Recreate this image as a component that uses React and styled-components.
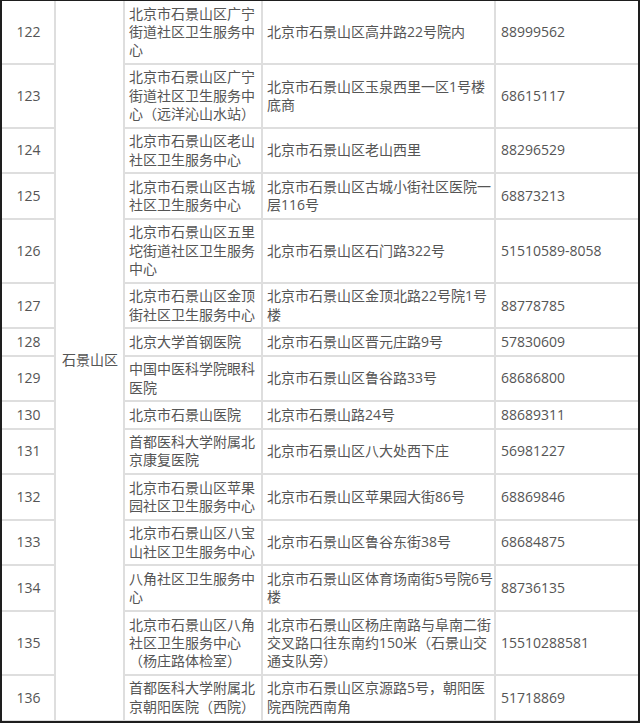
import React from "react";
import styled, { createGlobalStyle } from "styled-components";

const Global = createGlobalStyle`
  html, body { margin: 0; padding: 0; background: #fff; }
`;

const Frame = styled.div`
  width: 640px;
  height: 723px;
  box-sizing: border-box;
  border-style: solid;
  border-color: #1e1e1e;
  border-width: 1px 2px 2px 2px;
  overflow: hidden;
  background: #fff;
`;

const Table = styled.table`
  width: 636px;
  border-collapse: collapse;
  table-layout: fixed;
  border: none;
  font-family: "Open Sans", "Noto Sans CJK SC", sans-serif;
  font-size: 14px;
  line-height: 18.3px;
  color: #555;
  text-spacing-trim: space-all;

  tbody tr:first-child td {
    border-top: none;
  }
`;

const Col = styled.col`
  width: ${(p) => p.$w}px;
`;

const Cell = styled.td`
  border: 2px solid #dedede;
  padding: 3.5px 0 3.5px 4px;
  vertical-align: middle;
  text-align: left;
  word-break: normal;
`;

const NumCell = styled(Cell)`
  border-left: none;
  text-align: center;
  padding-left: 1px;
`;

const DistrictCell = styled(Cell)`
  padding-left: 6px;
`;

const PhoneCell = styled(Cell)`
  border-right: none;
  padding-left: 5px;
`;

const rows = [
  ["122", "北京市石景山区广宁街道社区卫生服务中心", "北京市石景山区高井路22号院内", "88999562"],
  ["123", "北京市石景山区广宁街道社区卫生服务中心（远洋沁山水站）", "北京市石景山区玉泉西里一区1号楼底商", "68615117"],
  ["124", "北京市石景山区老山社区卫生服务中心", "北京市石景山区老山西里", "88296529"],
  ["125", "北京市石景山区古城社区卫生服务中心", "北京市石景山区古城小街社区医院一层116号", "68873213"],
  ["126", "北京市石景山区五里坨街道社区卫生服务中心", "北京市石景山区石门路322号", "51510589-8058"],
  ["127", "北京市石景山区金顶街社区卫生服务中心", "北京市石景山区金顶北路22号院1号楼", "88778785"],
  ["128", "北京大学首钢医院", "北京市石景山区晋元庄路9号", "57830609"],
  ["129", "中国中医科学院眼科医院", "北京市石景山区鲁谷路33号", "68686800"],
  ["130", "北京市石景山医院", "北京市石景山路24号", "88689311"],
  ["131", "首都医科大学附属北京康复医院", "北京市石景山区八大处西下庄", "56981227"],
  ["132", "北京市石景山区苹果园社区卫生服务中心", "北京市石景山区苹果园大街86号", "68869846"],
  ["133", "北京市石景山区八宝山社区卫生服务中心", "北京市石景山区鲁谷东街38号", "68684875"],
  ["134", "八角社区卫生服务中心", "北京市石景山区体育场南街5号院6号楼", "88736135"],
  ["135", "北京市石景山区八角社区卫生服务中心（杨庄路体检室）", "北京市石景山区杨庄南路与阜南二街交叉路口往东南约150米（石景山交通支队旁）", "15510288581"],
  ["136", "首都医科大学附属北京朝阳医院（西院）", "北京市石景山区京源路5号，朝阳医院西院西南角", "51718869"],
];

export default function App() {
  return (
    <>
      <Global />
      <Frame>
        <Table>
          <colgroup>
            <Col $w={53} />
            <Col $w={69} />
            <Col $w={138} />
            <Col $w={233} />
            <Col $w={143} />
          </colgroup>
          <tbody>
            {rows.map((r, i) => (
              <tr key={r[0]}>
                <NumCell>{r[0]}</NumCell>
                {i === 0 && <DistrictCell rowSpan={rows.length}>石景山区</DistrictCell>}
                <Cell>{r[1]}</Cell>
                <Cell>{r[2]}</Cell>
                <PhoneCell>{r[3]}</PhoneCell>
              </tr>
            ))}
          </tbody>
        </Table>
      </Frame>
    </>
  );
}
